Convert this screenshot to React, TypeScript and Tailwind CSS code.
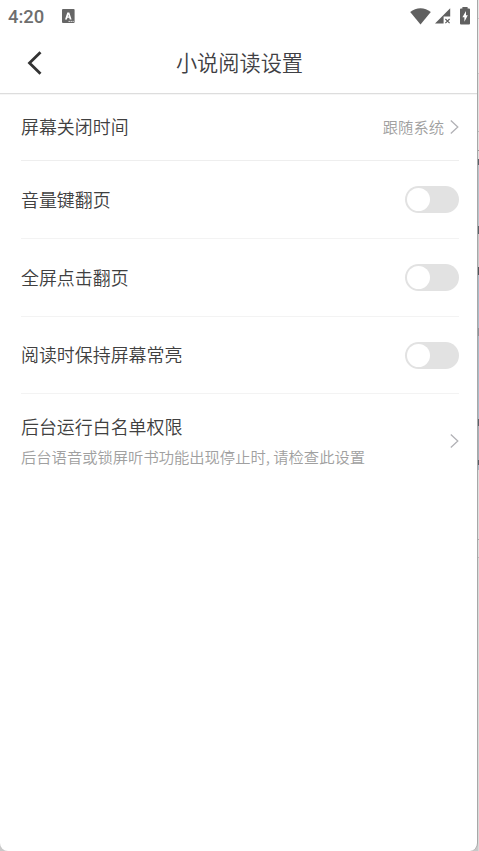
import { useState } from "react";

function StatusBar() {
  return (
    <div className="flex h-8 items-center pl-2 pr-[7px] text-[#6e6e6e]">
      <span className="font-['Roboto'] text-[18.4px] font-medium leading-8 pt-[2px]">4:20</span>
      <svg className="ml-[18px]" width="13" height="14" viewBox="0 0 13 14">
        <rect width="12.6" height="14" rx="1" fill="#666666" />
        <path d="M3 10.4 L5.3 3.4 H7.3 L9.6 10.4 H7.7 L7.2 8.8 H5.4 L4.9 10.4 Z M5.8 7.5 H6.8 L6.3 5.6 Z" fill="#ffffff" fillRule="evenodd" />
        <path d="M6.6 12.4h1.2M8.6 12.4h1.2M10.6 12.4h1" stroke="#ffffff" strokeWidth="1" />
      </svg>
      <svg className="ml-auto" width="21" height="17" viewBox="0 0 21 17">
        <path d="M10.5 16.6 L0.2 4 C6 -1.1 15 -1.1 20.8 4 Z" fill="#606060" />
      </svg>
      <svg className="ml-1" width="16" height="16" viewBox="0 0 16 16">
        <path d="M0 15.5 L15.2 0.3 V8.6 H8.6 V15.5 Z" fill="#606060" />
        <path d="M10.4 11 L14.6 15.2 M14.6 11 L10.4 15.2" stroke="#606060" strokeWidth="1.2" />
      </svg>
      <svg className="ml-[9px]" width="10" height="18" viewBox="0 0 10 18">
        <path d="M2.4 0 H7.6 V1.6 H9 Q10 1.6 10 2.6 V16.4 Q10 17.4 9 17.4 H1 Q0 17.4 0 16.4 V2.6 Q0 1.6 1 1.6 H2.4 Z" fill="#606060" />
        <path d="M6 4 L2.4 10.2 H4.4 V14.8 L7.8 8.2 H6 Z" fill="#ffffff" />
      </svg>
    </div>
  );
}

function Chevron() {
  return (
    <svg className="shrink-0" width="9" height="14" viewBox="0 0 9 14">
      <path d="M0.8 0.5 L7.8 7 L0.8 13.5" fill="none" stroke="#b2b2b6" strokeWidth="1.3" />
    </svg>
  );
}

function Toggle({ label }: { label: string }) {
  const [on, setOn] = useState(false);

  return (
    <button
      role="switch"
      aria-checked={on}
      aria-label={label}
      onClick={() => setOn(!on)}
      className={`flex h-[27px] w-[54px] items-center rounded-full px-[2px] ${on ? "justify-end bg-[#4a8cf0]" : "justify-start bg-[#e2e2e2]"}`}
    >
      <span className="h-[23px] w-[23px] rounded-full bg-white"></span>
    </button>
  );
}

const switches = [
  { label: "音量键翻页", height: "h-[78px]" },
  { label: "全屏点击翻页", height: "h-[78px]" },
  { label: "阅读时保持屏幕常亮", height: "h-[77px]" },
];

// Slivers of the desktop showing beside the window
const backdrop = [
  "h-[18px] bg-[#e6e6e6]",
  "h-px bg-[#c8c8c8]",
  "h-[54px] bg-[#e9e9e9]",
  "h-px bg-[#cccccc]",
  "h-[57px] bg-[#e2e0e0]",
  "h-px bg-[#bbbbbb]",
  "h-[18px] bg-[#e2e0e0]",
  "h-px bg-[#999999]",
  "h-[8px] bg-[#dddddd]",
  "h-[6px] bg-[#59626a]",
  "h-[61px] bg-[#b7c2ca]",
  "h-[8px] bg-[#59626a]",
  "h-[33px] bg-[#c5c8ca]",
  "h-[8px] bg-[#4e555b]",
  "h-[53px] bg-[#a9bac8]",
  "h-[8px] bg-[#8b939b]",
  "h-[83px] bg-[#a9bac8]",
  "h-[7px] bg-[#59626a]",
  "h-[34px] bg-[#a5b0b9]",
  "h-[5px] bg-[#555e66]",
  "h-[5px] bg-[#a5b8c6]",
  "h-[69px] bg-[#dedede]",
  "h-px bg-[#aaaaaa]",
  "h-[17px] bg-[#dedede]",
  "h-px bg-[#bbbbbb]",
  "grow bg-[#d9d9d9]",
];

export default function App() {
  return (
    <div className="flex h-[851px] w-[479px] overflow-hidden bg-[#c9c9c9] font-['Noto_Sans_CJK_SC',sans-serif] font-[350]">
      <div className="flex w-[478px] shrink-0 flex-col rounded-b-[8px] border-r border-[#a8a8a8] bg-white">
        <StatusBar />
        <header className="grid h-[61px] grid-cols-[61px_1fr_59px] items-center">
          <button className="pl-[27px]" aria-label="返回">
            <svg width="16" height="24" viewBox="0 0 16 24">
              <path d="M13.5 1.2 L2.5 12 L13.5 22.8" fill="none" stroke="#333333" strokeWidth="2.8" />
            </svg>
          </button>
          <h1 className="pb-[2px] text-center text-[21.2px] text-[#404044]">小说阅读设置</h1>
        </header>
        <div className="h-px shrink-0 bg-[#dddddd]"></div>
        <div className="h-px shrink-0 bg-[#f6f6f6]"></div>

        <main className="pl-[21px] pr-[18px] text-[17.95px] text-[#404040]">
          <div className="flex h-[66px] items-center border-b border-[#eeeeee] pb-px">
            <span className="pb-px">屏幕关闭时间</span>
            <span className="ml-auto mr-[6px] pb-px text-[15.3px] text-[#a0a0a0]">跟随系统</span>
            <Chevron />
          </div>

          {switches.map((item) => (
            <div key={item.label} className={`flex items-center justify-between border-b border-[#f3f3f3] ${item.height}`}>
              <span className="pb-px">{item.label}</span>
              <Toggle label={item.label} />
            </div>
          ))}

          <div className="flex h-[95px] items-center justify-between pb-[2px]">
            <div className="flex flex-col">
              <span className="leading-[30px]">后台运行白名单权限</span>
              <span className="text-[15.3px] leading-[30px] text-[#a0a0a0]">后台语音或锁屏听书功能出现停止时, 请检查此设置</span>
            </div>
            <Chevron />
          </div>
        </main>
      </div>
      <div className="flex w-px flex-col">
        {backdrop.map((tone, i) => (
          <div key={i} className={tone}></div>
        ))}
      </div>
    </div>
  );
}
